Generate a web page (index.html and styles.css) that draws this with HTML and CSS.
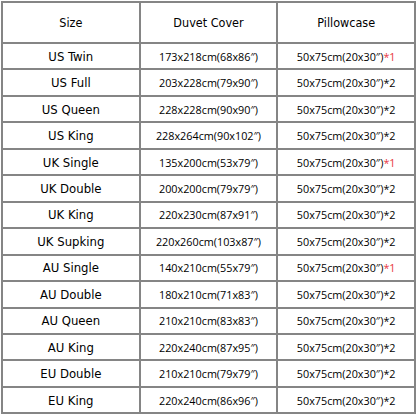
FILE: index.html
```html
<!DOCTYPE html>
<html>
<head>
<meta charset="utf-8">
<link rel="stylesheet" href="styles.css">
</head>
<body>
<div class="chart">
  <div class="cell head">Size</div>
  <div class="cell head">Duvet Cover</div>
  <div class="cell head">Pillowcase</div>

  <div class="cell size">US Twin</div>
  <div class="cell num">173x218cm(68x86″)</div>
  <div class="cell num">50x75cm(20x30″)<span class="red">*1</span></div>

  <div class="cell size">US Full</div>
  <div class="cell num">203x228cm(79x90″)</div>
  <div class="cell num">50x75cm(20x30″)*2</div>

  <div class="cell size">US Queen</div>
  <div class="cell num">228x228cm(90x90″)</div>
  <div class="cell num">50x75cm(20x30″)*2</div>

  <div class="cell size">US King</div>
  <div class="cell num">228x264cm(90x102″)</div>
  <div class="cell num">50x75cm(20x30″)*2</div>

  <div class="cell size">UK Single</div>
  <div class="cell num">135x200cm(53x79″)</div>
  <div class="cell num">50x75cm(20x30″)<span class="red">*1</span></div>

  <div class="cell size">UK Double</div>
  <div class="cell num">200x200cm(79x79″)</div>
  <div class="cell num">50x75cm(20x30″)*2</div>

  <div class="cell size">UK King</div>
  <div class="cell num">220x230cm(87x91″)</div>
  <div class="cell num">50x75cm(20x30″)*2</div>

  <div class="cell size">UK Supking</div>
  <div class="cell num">220x260cm(103x87″)</div>
  <div class="cell num">50x75cm(20x30″)*2</div>

  <div class="cell size">AU Single</div>
  <div class="cell num">140x210cm(55x79″)</div>
  <div class="cell num">50x75cm(20x30″)<span class="red">*1</span></div>

  <div class="cell size">AU Double</div>
  <div class="cell num">180x210cm(71x83″)</div>
  <div class="cell num">50x75cm(20x30″)*2</div>

  <div class="cell size">AU Queen</div>
  <div class="cell num">210x210cm(83x83″)</div>
  <div class="cell num">50x75cm(20x30″)*2</div>

  <div class="cell size">AU King</div>
  <div class="cell num">220x240cm(87x95″)</div>
  <div class="cell num">50x75cm(20x30″)*2</div>

  <div class="cell size">EU Double</div>
  <div class="cell num">210x210cm(79x79″)</div>
  <div class="cell num">50x75cm(20x30″)*2</div>

  <div class="cell size">EU King</div>
  <div class="cell num">220x240cm(86x96″)</div>
  <div class="cell num">50x75cm(20x30″)*2</div>
</div>
</body>
</html>
```

FILE: styles.css
```css
html, body {
  margin: 0;
  padding: 0;
  background: #ffffff;
}

.chart {
  margin: 1px 0 0 1px;
  width: 415px;
  box-sizing: border-box;
  display: grid;
  grid-template-columns: 1fr 1fr 1fr;
  grid-template-rows: 39px repeat(14, 24.46px);
  gap: 2px;
  padding: 2px;
  background: #858585;
}

.cell {
  background: #ffffff;
  display: flex;
  align-items: center;
  justify-content: center;
  color: #000000;
  white-space: nowrap;
}

.head,
.size {
  font-family: "DejaVu Sans Condensed", "DejaVu Sans", sans-serif;
  font-stretch: condensed;
  font-size: 13px;
}

.head {
  font-size: 12.5px;
}

.num {
  font-family: "Open Sans", "Liberation Sans", sans-serif;
  font-size: 10.8px;
}

.red {
  color: #e8383d;
}
```
